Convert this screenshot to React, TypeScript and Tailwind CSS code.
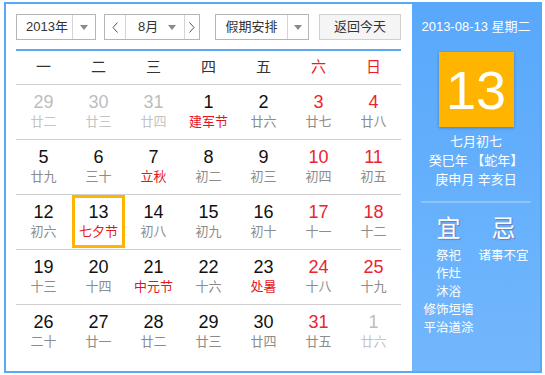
const weekdays = ["一", "二", "三", "四", "五", "六", "日"];

type Day = { n: number; lunar: string; off?: boolean; fest?: boolean; sel?: boolean };

const weeks: Day[][] = [
  [
    { n: 29, lunar: "廿二", off: true },
    { n: 30, lunar: "廿三", off: true },
    { n: 31, lunar: "廿四", off: true },
    { n: 1, lunar: "建军节", fest: true },
    { n: 2, lunar: "廿六" },
    { n: 3, lunar: "廿七" },
    { n: 4, lunar: "廿八" },
  ],
  [
    { n: 5, lunar: "廿九" },
    { n: 6, lunar: "三十" },
    { n: 7, lunar: "立秋", fest: true },
    { n: 8, lunar: "初二" },
    { n: 9, lunar: "初三" },
    { n: 10, lunar: "初四" },
    { n: 11, lunar: "初五" },
  ],
  [
    { n: 12, lunar: "初六" },
    { n: 13, lunar: "七夕节", fest: true, sel: true },
    { n: 14, lunar: "初八" },
    { n: 15, lunar: "初九" },
    { n: 16, lunar: "初十" },
    { n: 17, lunar: "十一" },
    { n: 18, lunar: "十二" },
  ],
  [
    { n: 19, lunar: "十三" },
    { n: 20, lunar: "十四" },
    { n: 21, lunar: "中元节", fest: true },
    { n: 22, lunar: "十六" },
    { n: 23, lunar: "处暑", fest: true },
    { n: 24, lunar: "十八" },
    { n: 25, lunar: "十九" },
  ],
  [
    { n: 26, lunar: "二十" },
    { n: 27, lunar: "廿一" },
    { n: 28, lunar: "廿二" },
    { n: 29, lunar: "廿三" },
    { n: 30, lunar: "廿四" },
    { n: 31, lunar: "廿五" },
    { n: 1, lunar: "廿六", off: true },
  ],
];

const Caret = () => (
  <svg width="8" height="5" viewBox="0 0 8 5">
    <path d="M0 0h8L4 5z" fill="#8a8a8a" />
  </svg>
);

const Chevron = ({ right }: { right?: boolean }) => (
  <svg width="6" height="11" viewBox="0 0 6 11">
    <path d={right ? "M0.5 0.5L5 5.5L0.5 10.5" : "M5.5 0.5L1 5.5L5.5 10.5"} fill="none" stroke="#555" strokeWidth="1" />
  </svg>
);

const App = () => {
  return (
    <div className="w-[545px] h-[375px] bg-white font-['Liberation_Sans','Noto_Sans_CJK_SC',sans-serif] pt-[2px] pl-[4px]">
      <div className="w-[538px] h-[371px] border-2 border-[#58a8f5] flex">

        {/* Calendar */}
        <div className="w-[406px] pl-[10px] pr-[11px] pt-[10px]">

          {/* Toolbar */}
          <div className="flex h-[26px] text-[13px] text-[#333]">
            <div className="w-[80px] flex border border-[#b5b5b5]">
              <div className="w-[55px] flex items-center pl-[9px]">2013年</div>
              <div className="flex-1 flex items-center justify-center border-l border-[#d5d5d5]"><Caret /></div>
            </div>

            <div className="ml-[8px] w-[96px] flex border border-[#b5b5b5]">
              <div className="w-[21px] flex items-center justify-center border-r border-[#d5d5d5]"><Chevron /></div>
              <div className="flex-1 flex items-center pl-[12px]">8月</div>
              <div className="w-[16px] flex items-center"><Caret /></div>
              <div className="w-[15px] flex items-center justify-center border-l border-[#d5d5d5]"><Chevron right /></div>
            </div>

            <div className="ml-[15px] w-[94px] flex border border-[#b5b5b5]">
              <div className="w-[71px] flex items-center justify-center">假期安排</div>
              <div className="flex-1 flex items-center justify-center border-l border-[#d5d5d5]"><Caret /></div>
            </div>

            <div className="ml-[10px] w-[82px] flex items-center justify-center border border-[#d0d0d0] bg-[#f5f5f5]">
              返回今天
            </div>
          </div>

          <div className="mt-[9px] h-[2px] bg-[#58a8f5]"></div>

          {/* Weekdays */}
          <div className="grid grid-cols-7 h-[33px] items-center text-[15px]">
            {weekdays.map((w, i) => (
              <div key={w} className={`text-center ${i >= 5 ? "text-[#ec1c24]" : "text-[#333]"}`}>{w}</div>
            ))}
          </div>

          {/* Days */}
          {weeks.map((week, wi) => (
            <div key={wi} className="grid grid-cols-7 h-[55px] border-t border-[#cfcfcf]">
              {week.map((d, di) => {
                const numColor = d.off ? "text-[#bdbdbd]" : di >= 5 ? "text-[#ec2430]" : "text-[#111]";
                const lunarColor = d.off ? "text-[#c4c4c4]" : d.fest ? "text-[#e8141c]" : "text-[#8c8c8c]";
                return (
                  <div
                    key={di}
                    className={`flex flex-col items-center justify-center ${d.sel ? "border-[3px] border-[#ffb400] mx-px mb-px" : ""}`}
                  >
                    <div className={`text-[18px] leading-[19px] ${numColor}`}>{d.n}</div>
                    <div className={`text-[13px] leading-[19px] ${lunarColor}`}>{d.lunar}</div>
                  </div>
                );
              })}
            </div>
          ))}
        </div>

        {/* Side panel */}
        <div className="flex-1 bg-gradient-to-b from-[#58a8fb] to-[#72b7fd] flex flex-col items-center text-white">
          <div className="mt-[14px] text-[13px] leading-[18px]">2013-08-13 星期二</div>

          <div className="mt-[16px] w-[75px] h-[75px] bg-[#ffb400] flex items-center justify-center shadow-[0_1px_3px_rgba(0,0,0,0.25)]">
            <span className="text-[54px] leading-none">13</span>
          </div>

          <div className="mt-[5px] text-[13px] leading-[19px] text-center">
            <div>七月初七</div>
            <div>癸巳年 【蛇年】</div>
            <div>庚申月 辛亥日</div>
          </div>

          <div className="mt-[12px] w-[110px] h-[2px] bg-[#8cc5fd]"></div>

          <div className="w-[110px] grid grid-cols-2 mt-[11px]">
            <div className="flex flex-col items-center">
              <div className="text-[24px] leading-[30px] [text-shadow:1px_1px_1px_rgba(120,60,120,0.5)]">宜</div>
              <div className="mt-[3px] text-[12.5px] leading-[18px] text-center whitespace-nowrap">
                <div>祭祀</div>
                <div>作灶</div>
                <div>沐浴</div>
                <div>修饰垣墙</div>
                <div>平治道涂</div>
              </div>
            </div>
            <div className="flex flex-col items-center">
              <div className="text-[24px] leading-[30px] [text-shadow:1px_1px_1px_rgba(120,60,120,0.5)]">忌</div>
              <div className="mt-[3px] text-[12.5px] leading-[18px] whitespace-nowrap">诸事不宜</div>
            </div>
          </div>
        </div>

      </div>
    </div>
  );
};

export default App;
